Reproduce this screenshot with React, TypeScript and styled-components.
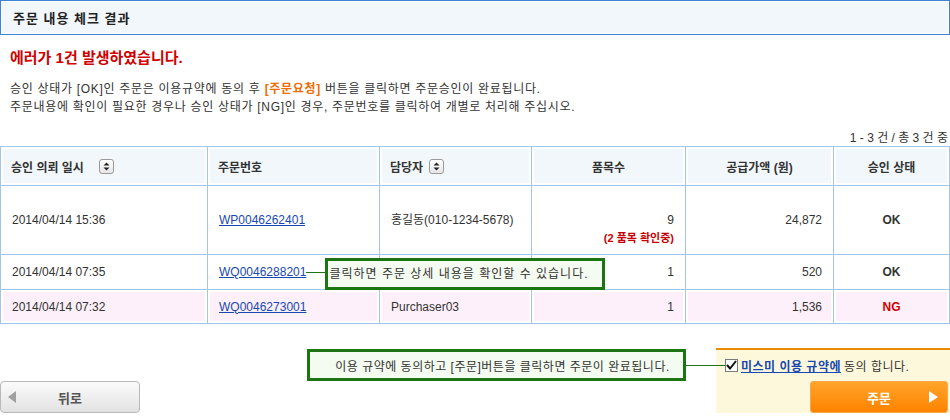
import styled, { createGlobalStyle } from "styled-components"

const FONT = `"Liberation Sans", "Noto Sans CJK KR", sans-serif`

const GlobalStyle = createGlobalStyle`
  body {
    margin: 0;
    background: #fff;
  }
  * {
    box-sizing: border-box;
  }
`

const Page = styled.div`
  width: 950px;
  font-family: ${FONT};
  font-size: 12px;
  color: #333;
`

const TitleBar = styled.div`
  height: 35px;
  display: flex;
  align-items: center;
  padding-left: 12px;
  border: 1px solid #3c84d4;
  box-shadow: inset 0 0 0 1px #fff;
  background: #f2f7fc;
  font-size: 13px;
  font-weight: bold;
  letter-spacing: 1px;
  color: #222;
`

const ErrorTitle = styled.h2`
  margin: 13px 0 0 10px;
  font-size: 15px;
  line-height: 20px;
  font-weight: bold;
  color: #d10000;
`

const Notice = styled.p`
  margin: 12px 0 0 10px;
  line-height: 18px;
  letter-spacing: 0.7px;
  color: #333;

  strong {
    color: #f26a00;
  }
`

const Count = styled.div`
  margin-top: 14px;
  padding-right: 2px;
  text-align: right;
  line-height: 16px;
  color: #333;
`

const Table = styled.table`
  width: 950px;
  table-layout: fixed;
  border-collapse: separate;
  border-spacing: 0;
  border-top: 1px solid #a3c6e8;
  border-left: 1px solid #a3c6e8;
`

const Th = styled.th<{ $align?: string }>`
  height: 39px;
  padding: 0 10px;
  text-align: ${(p) => p.$align || "left"};
  font-weight: bold;
  color: #333;
  background: #f2f7fc;
  box-shadow: inset 0 0 0 2px #fff;
  border-right: 1px solid #a3c6e8;
  border-bottom: 1px solid #a3c6e8;
  white-space: nowrap;
`

const HeadLabel = styled.span`
  display: inline-flex;
  align-items: center;
`

const SortBox = styled.span<{ $gap: number }>`
  display: inline-flex;
  align-items: center;
  justify-content: center;
  width: 15px;
  height: 15px;
  margin-left: ${(p) => p.$gap}px;
  border: 1px solid #9a9a9a;
  border-radius: 3px;
  background: linear-gradient(#ffffff, #e6e6e6);
`

const Tr = styled.tr<{ $h: number; $pink?: boolean }>`
  height: ${(p) => p.$h}px;

  td {
    background: ${(p) => (p.$pink ? "#fdf0fa" : "#fff")};
  }
`

const Td = styled.td<{ $align?: string; $top?: boolean }>`
  padding: ${(p) => (p.$top ? "26px 11px 0 11px" : "0 11px")};
  vertical-align: ${(p) => (p.$top ? "top" : "middle")};
  text-align: ${(p) => p.$align || "left"};
  border-right: 1px solid #a3c6e8;
  border-bottom: 1px solid #a3c6e8;
  box-shadow: inset 0 0 0 2px #fff;
  color: #333;
  line-height: 16px;
  white-space: nowrap;
`

const Status = styled.span<{ $ng?: boolean }>`
  font-weight: bold;
  color: ${(p) => (p.$ng ? "#d10000" : "#333")};
`

const Pending = styled.div`
  margin-top: 2px;
  font-size: 11px;
  font-weight: bold;
  color: #c80000;
`

const LinkWrap = styled.span`
  position: relative;
  display: inline-block;
`

const OrderLink = styled.a`
  color: #1848b0;
  text-decoration: underline;
`

const Callout = styled.div<{ $w: number }>`
  position: absolute;
  z-index: 2;
  width: ${(p) => p.$w}px;
  height: 32px;
  display: flex;
  align-items: center;
  border: 3px solid #1d7412;
  background: #f4fbf0;
  color: #333;
  font-size: 12px;
  white-space: nowrap;
`

const RowCallout = styled(Callout)`
  left: calc(100% + 19px);
  top: -6px;
  padding-left: 1px;
  letter-spacing: 1px;

  &::before {
    content: "";
    position: absolute;
    right: calc(100% + 3px);
    top: 11px;
    width: 19px;
    height: 1px;
    background: #1d7412;
  }
`

const AgreeCallout = styled(Callout)`
  right: calc(100% + 30px);
  top: -1px;
  justify-content: center;
  padding-left: 12px;
  letter-spacing: 0.5px;

  &::after {
    content: "";
    position: absolute;
    left: calc(100% + 3px);
    top: 13px;
    width: 39px;
    height: 1px;
    background: #1d7412;
  }
`

const Footer = styled.div`
  display: flex;
  justify-content: space-between;
  align-items: flex-end;
  margin-top: 24px;
`

const BackButton = styled.button`
  position: relative;
  width: 140px;
  height: 32px;
  border: 1px solid #b9b9b9;
  border-radius: 4px;
  background: linear-gradient(#fbfbfb, #e2e2e2);
  font-family: ${FONT};
  font-size: 13px;
  font-weight: bold;
  color: #555;
  display: flex;
  align-items: center;
  justify-content: center;
  padding: 0;
`

const Arrow = styled.span<{ $dir: "left" | "right"; $color: string }>`
  position: absolute;
  top: 50%;
  ${(p) => (p.$dir === "left" ? "left: 7px;" : "right: 9px;")}
  transform: translateY(-50%);
  width: 0;
  height: 0;
  border-top: 6px solid transparent;
  border-bottom: 6px solid transparent;
  ${(p) =>
    p.$dir === "left"
      ? `border-right: 8px solid ${p.$color};`
      : `border-left: 9px solid ${p.$color};`}
`

const OrderBox = styled.div`
  position: relative;
  width: 234px;
  height: 65px;
  border-top: 2px solid #e98b00;
  background: #fdf8dc;
  padding: 7px 2px 0 9px;
  display: flex;
  flex-direction: column;
`

const AgreeRow = styled.label`
  display: flex;
  align-items: center;
  height: 16px;
  gap: 3px;
  color: #333;
  letter-spacing: 0.5px;
`

const CheckBox = styled.span`
  display: inline-flex;
  align-items: center;
  justify-content: center;
  width: 13px;
  height: 13px;
  border: 1px solid #7a7a7a;
  background: #fff;
`

const TermsLink = styled.a`
  color: #1848b0;
  font-weight: bold;
  text-decoration: underline;
`

const OrderButton = styled.button`
  position: relative;
  align-self: flex-end;
  margin-top: 8px;
  width: 138px;
  height: 32px;
  border: 1px solid #f6a84c;
  border-radius: 3px;
  background: linear-gradient(#ffa42a, #ff8200);
  font-family: ${FONT};
  font-size: 13px;
  font-weight: bold;
  color: #fff;
  padding: 0;
`

const SortIcon = ({ gap }: { gap: number }) => (
  <SortBox $gap={gap}>
    <svg width="7" height="9" viewBox="0 0 7 9">
      <path d="M3.5 0.5 L6.5 3.5 L0.5 3.5 Z" fill="#222" />
      <path d="M0.5 5.5 L6.5 5.5 L3.5 8.5 Z" fill="#222" />
    </svg>
  </SortBox>
)

const rows = [
  {
    date: "2014/04/14 15:36",
    no: "WP0046262401",
    person: "홍길동(010-1234-5678)",
    qty: "9",
    price: "24,872",
    status: "OK",
    h: 69,
    pending: "(2 품목 확인중)",
  },
  {
    date: "2014/04/14 07:35",
    no: "WQ0046288201",
    person: "",
    qty: "1",
    price: "520",
    status: "OK",
    h: 35,
    tip: "클릭하면 주문 상세 내용을 확인할 수 있습니다.",
  },
  {
    date: "2014/04/14 07:32",
    no: "WQ0046273001",
    person: "Purchaser03",
    qty: "1",
    price: "1,536",
    status: "NG",
    h: 34,
    pink: true,
  },
]

export default function App() {
  return (
    <Page>
      <GlobalStyle />
      <TitleBar>주문 내용 체크 결과</TitleBar>
      <ErrorTitle>에러가 1건 발생하였습니다.</ErrorTitle>
      <Notice>
        승인 상태가 [OK]인 주문은 이용규약에 동의 후 <strong>[주문요청]</strong> 버튼을 클릭하면 주문승인이 완료됩니다.
        <br />
        주문내용에 확인이 필요한 경우나 승인 상태가 [NG]인 경우, 주문번호를 클릭하여 개별로 처리해 주십시오.
      </Notice>
      <Count>1 - 3 건 / 총 3 건 중</Count>
      <Table>
        <colgroup>
          <col style={{ width: 207 }} />
          <col style={{ width: 172 }} />
          <col style={{ width: 152 }} />
          <col style={{ width: 154 }} />
          <col style={{ width: 148 }} />
          <col />
        </colgroup>
        <thead>
          <tr>
            <Th>
              <HeadLabel>
                승인 의뢰 일시
                <SortIcon gap={15} />
              </HeadLabel>
            </Th>
            <Th>주문번호</Th>
            <Th>
              <HeadLabel>
                담당자
                <SortIcon gap={6} />
              </HeadLabel>
            </Th>
            <Th $align="center">품목수</Th>
            <Th $align="center">공급가액 (원)</Th>
            <Th $align="center">승인 상태</Th>
          </tr>
        </thead>
        <tbody>
          {rows.map((r) => (
            <Tr key={r.no} $h={r.h} $pink={r.pink}>
              <Td>{r.date}</Td>
              <Td>
                <LinkWrap>
                  <OrderLink href="#">{r.no}</OrderLink>
                  {r.tip && <RowCallout $w={280}>{r.tip}</RowCallout>}
                </LinkWrap>
              </Td>
              <Td>{r.person}</Td>
              <Td $align="right" $top={!!r.pending}>
                {r.qty}
                {r.pending && <Pending>{r.pending}</Pending>}
              </Td>
              <Td $align="right">{r.price}</Td>
              <Td $align="center">
                <Status $ng={r.status === "NG"}>{r.status}</Status>
              </Td>
            </Tr>
          ))}
        </tbody>
      </Table>
      <Footer>
        <BackButton>
          <Arrow $dir="left" $color="#a0a0a0" />
          뒤로
        </BackButton>
        <OrderBox>
          <AgreeCallout $w={379}>
            이용 규약에 동의하고 [주문]버튼을 클릭하면 주문이 완료됩니다.
          </AgreeCallout>
          <AgreeRow>
            <CheckBox>
              <svg width="11" height="10" viewBox="0 0 11 10">
                <path d="M1 5 L4 8.5 L10 1" fill="none" stroke="#111" strokeWidth="2" />
              </svg>
            </CheckBox>
            <TermsLink href="#">미스미 이용 규약에</TermsLink>
            <span>동의 합니다.</span>
          </AgreeRow>
          <OrderButton>
            주문
            <Arrow $dir="right" $color="#fff" />
          </OrderButton>
        </OrderBox>
      </Footer>
    </Page>
  )
}
